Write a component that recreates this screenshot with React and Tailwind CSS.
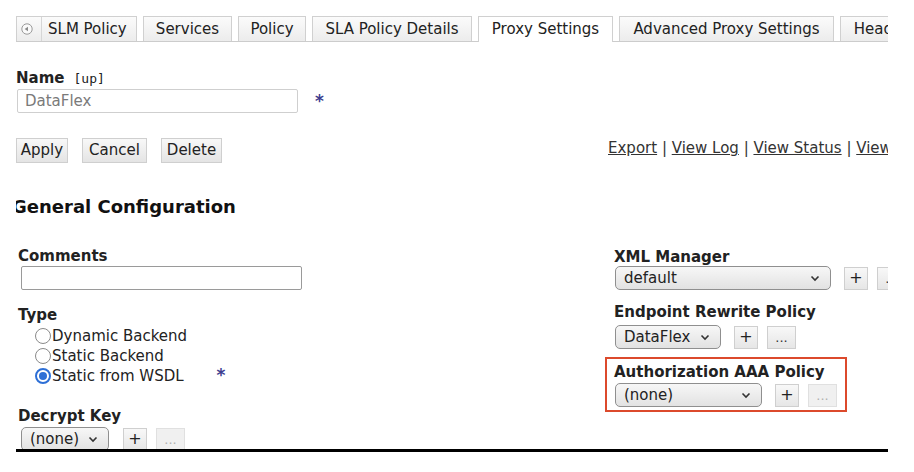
import React from 'react';

const tabs = [
  { label: 'Services', w: 'w-[89px]' },
  { label: 'Policy', w: 'w-[68px]' },
  { label: 'SLA Policy Details', w: 'w-[160px]' },
  { label: 'Proxy Settings', w: 'w-[135px]', active: true },
  { label: 'Advanced Proxy Settings', w: 'w-[215px]' },
  { label: 'Headers', w: 'w-[90px]' },
];

const Chevron = () => (
  <svg width="10" height="7" viewBox="0 0 10 7" className="shrink-0">
    <path d="M1.5 1.5 L5 5 L8.5 1.5" fill="none" stroke="#333" strokeWidth="1.6" />
  </svg>
);

const Select = ({ value, w }) => (
  <div className={`${w} h-[24px] flex items-center justify-between pl-[8px] pr-[10px] rounded-[5px] border border-[#8f8f8f] bg-gradient-to-b from-[#f7f7f7] to-[#e2e2e2] text-[#222]`}>
    <span>{value}</span>
    <Chevron />
  </div>
);

const PlusBtn = ({ ml = 'ml-[13px]' }) => (
  <div className={`${ml} w-[24px] h-[23px] flex items-center justify-center border border-[#cfcfcf] bg-gradient-to-b from-[#f8f8f8] to-[#e6e6e6] text-[#222] text-[16px]`}>+</div>
);

const DotsBtn = ({ disabled }) => (
  <div className={`ml-[9px] w-[29px] h-[23px] flex items-center justify-center border text-[13px] leading-none ${disabled ? 'border-[#e0e0e0] bg-[#f0f0f0] text-[#b0b0b0]' : 'border-[#cfcfcf] bg-gradient-to-b from-[#f8f8f8] to-[#e6e6e6] text-[#333]'}`}>...</div>
);

const Field = ({ value, w, disabled }) => (
  <div className="flex items-center">
    <Select value={value} w={w} />
    <PlusBtn />
    <DotsBtn disabled={disabled} />
  </div>
);

const Radio = ({ label, checked, star }) => (
  <div className="flex items-center h-[20px] pl-[17px]">
    {checked ? (
      <span className="w-[16px] h-[16px] rounded-full border-2 border-[#2d6fd6] bg-white flex items-center justify-center">
        <span className="w-[8px] h-[8px] rounded-full bg-[#2d6fd6]" />
      </span>
    ) : (
      <span className="w-[16px] h-[16px] rounded-full border-[1.5px] border-[#8a8a8a] bg-white" />
    )}
    <span className="ml-[1px]">{label}</span>
    {star && <span className="ml-[33px] text-[17px] text-[#3d3d8f] font-bold">*</span>}
  </div>
);

const App = () => {
  return (
    <div className="w-[914px] h-[472px] bg-white pt-[16px] pl-[16px] font-['DejaVu_Sans',Verdana,sans-serif] text-[15px] text-[#222] whitespace-nowrap">
      <div className="w-[872px] h-[436px] overflow-hidden border-b-[3px] border-black">
        {/* tab strip */}
        <div className="flex gap-[6px] h-[26px] border-b border-[#cccccc]">
          <div className="shrink-0 w-[121px] h-[25px] flex items-center border border-b-0 border-[#d0d0d0] bg-gradient-to-b from-[#fbfbfb] to-[#ececec]">
            <svg width="12" height="12" viewBox="0 0 12 12" className="ml-[4px]">
              <circle cx="6" cy="6" r="5.2" fill="#fafafa" stroke="#9a9a9a" strokeWidth="1" />
              <path d="M3.6 6 L7 3.8 L7 8.2 Z" fill="#8a8a8a" />
            </svg>
            <span className="ml-[8px] w-px h-full bg-[#d6d6d6]" />
            <span className="ml-[6px]">SLM Policy</span>
          </div>
          {tabs.map((t) => (
            <div
              key={t.label}
              className={`shrink-0 ${t.w} h-[25px] flex items-center justify-center border border-b-0 border-[#d0d0d0] ${t.active ? 'bg-white h-[26px] relative' : 'bg-gradient-to-b from-[#fbfbfb] to-[#ececec]'}`}
            >
              {t.label}
            </div>
          ))}
        </div>

        {/* name */}
        <div className="mt-[27px] h-[18px] leading-[18px] flex items-baseline">
          <span className="font-bold">Name</span>
          <span className="ml-[9px] font-['DejaVu_Sans_Mono',monospace] text-[13px]">[up]</span>
        </div>
        <div className="mt-[2px] flex items-center">
          <div className="ml-px w-[281px] h-[24px] flex items-center pl-[7px] border border-[#cfcfcf] rounded-[2px] text-[#7a7a7a]">DataFlex</div>
          <span className="ml-[17px] text-[17px] font-bold text-[#3d3d8f] leading-[24px]">*</span>
        </div>

        {/* buttons + links */}
        <div className="mt-[25px] grid grid-cols-[592px_1fr]">
          <div className="flex gap-[14px]">
            <div className="w-[52px] h-[25px] flex items-center justify-center border border-[#cfcfcf] bg-gradient-to-b from-[#f8f8f8] to-[#e4e4e4]">Apply</div>
            <div className="w-[65px] h-[25px] flex items-center justify-center border border-[#cfcfcf] bg-gradient-to-b from-[#f8f8f8] to-[#e4e4e4]">Cancel</div>
            <div className="w-[61px] h-[25px] flex items-center justify-center border border-[#cfcfcf] bg-gradient-to-b from-[#f8f8f8] to-[#e4e4e4]">Delete</div>
          </div>
          <div className="mt-px leading-[18px] text-[#333]">
            <span className="underline">Export</span> | <span className="underline">View Log</span> | <span className="underline">View Status</span> | <span className="underline">View Probe</span>
          </div>
        </div>

        {/* heading */}
        <h2 className="mt-[33px] -ml-[4px] text-[18px] font-bold leading-[22px] text-[#111]">General Configuration</h2>

        <div className="mt-[29px] grid grid-cols-[598px_1fr]">
          {/* left column */}
          <div className="pl-[2px]">
            <div className="font-bold leading-[18px]">Comments</div>
            <div className="mt-px ml-[3px] w-[281px] h-[24px] border border-[#9a9a9a] rounded-[2px] bg-white" />
            <div className="mt-[16px] font-bold leading-[18px]">Type</div>
            <div className="mt-[2px]">
              <Radio label="Dynamic Backend" />
              <Radio label="Static Backend" />
              <Radio label="Static from WSDL" checked star />
            </div>
            <div className="mt-[21px] font-bold leading-[18px]">Decrypt Key</div>
            <div className="mt-[2px] ml-[3px] flex items-center">
              <Select value="(none)" w="w-[88px]" />
              <PlusBtn ml="ml-[14px]" />
              <DotsBtn disabled />
            </div>
          </div>

          {/* right column */}
          <div className="pt-px">
            <div className="font-bold leading-[18px]">XML Manager</div>
            <div className="ml-px">
              <Field value="default" w="w-[216px]" />
            </div>
            <div className="mt-[13px] font-bold leading-[18px]">Endpoint Rewrite Policy</div>
            <div className="mt-[4px] ml-px">
              <Field value="DataFlex" w="w-[106px]" />
            </div>
            <div className="mt-[8px] -ml-[9px] w-[242px] border-2 border-[#dc4a2c] pl-[7px] pt-[4px] pb-[3px]">
              <div className="font-bold leading-[18px]">Authorization AAA Policy</div>
              <div className="mt-[2px] ml-px">
                <Field value="(none)" w="w-[147px]" disabled />
              </div>
            </div>
          </div>
        </div>
      </div>
    </div>
  );
};

export default App;
